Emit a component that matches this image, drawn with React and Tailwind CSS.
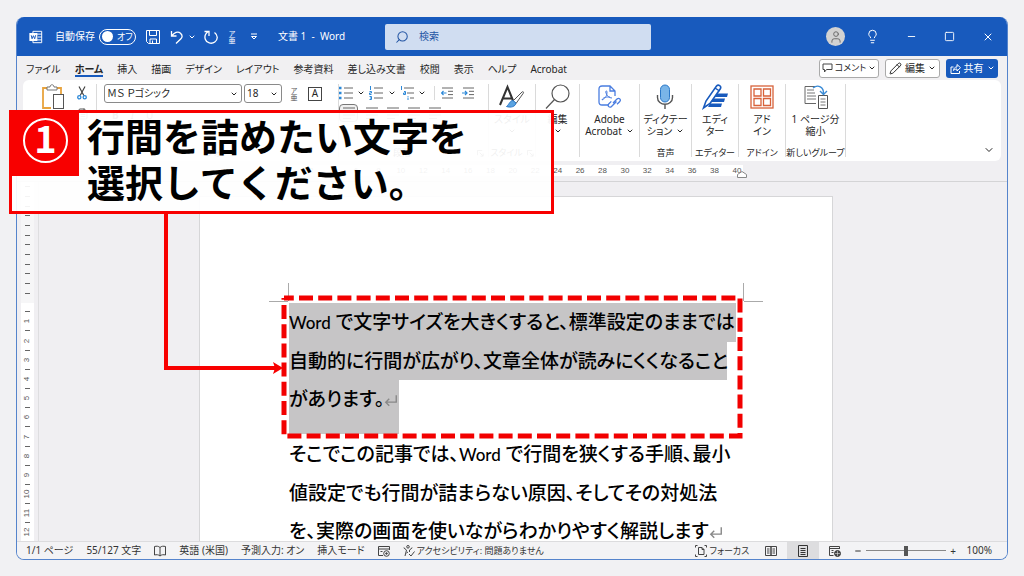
import { useState } from "react";
import {
    ChevronDown,
    FileText,
    Lightbulb,
    Minus,
    Pencil,
    Search,
    Square,
    User,
    X,
} from "lucide-react";

const tabs = ["ファイル", "ホーム", "挿入", "描画", "デザイン", "レイアウト", "参考資料", "差し込み文書", "校閲", "表示", "ヘルプ", "Acrobat"];

const rulerNumbers = Array.from({ length: 20 }, (_, i) => (i + 1) * 2);
const marginTicks = Array.from({ length: 12 }, (_, i) => i);
const sideRuler = Array.from({ length: 25 }, (_, i) => (i % 2 ? (i + 1) / 2 : null));

const WordIcon = () => (
    <svg viewBox="0 0 16 16" className="h-[14px] w-[14px]" fill="none" stroke="white" strokeWidth="1.1">
        <path d="M4.5 4V1.5h10v13h-10V12M8 4.7h6.5M10 8h4.5M8 11.3h6.5" />
        <rect x="1" y="4" width="8" height="8" fill="white" />
        <path d="M2.5 6l1 4L5 6.5 6.5 10l1-4" stroke="#185abd" />
    </svg>
);

const SaveIcon = () => (
    <svg viewBox="0 0 14 14" className="h-[14px] w-[14px]" fill="none" stroke="white">
        <path d="M.5.5h13v13H2.500l-2-2zM3.500.5v5h7v-5M4 13.500V9h6.500v4.500M6.500 10.500v3" />
    </svg>
);

const UndoIcon = () => (
    <svg viewBox="0 0 14 14" className="h-[14px] w-[14px]" fill="none" stroke="white" strokeWidth="1.300">
        <path d="M1.500 1v5h5M1.800 5.800C4 2.500 8 .8 10.500 3.200s1.700 4.300.2 5.800L6 13.500" />
    </svg>
);

const RedoIcon = () => (
    <svg viewBox="0 0 14 14" className="h-[14px] w-[14px]" fill="none" stroke="white" strokeWidth="1.300">
        <path d="M10.500 2.500C14 5 14.200 9.500 10.800 12S2.500 13 1.300 9.200 2 3 4.500 1.500M.5 1.500H5v4.500" />
    </svg>
);

const RubyIcon = ({ className }) => (
    <span className={`flex w-3 flex-col items-center text-[7px] leading-[7px] ${className}`}>
        <span>ア</span>
        <span>亜</span>
    </span>
);

const CommentIcon = () => (
    <svg viewBox="0 0 11 10" className="h-[10px] w-[11px]" fill="none" stroke="#444">
        <path d="M1 1h9v5.500H4.500L2.500 9V6.500H1z" />
    </svg>
);

const ShareIcon = () => (
    <svg viewBox="0 0 11 11" className="h-[11px] w-[11px]" fill="none" stroke="white">
        <path d="M3.500 4H1v6.500h8.500V8M3.500 7.500c.3-2.500 1.500-3.500 3.500-3.500V1.500l3.500 3.200L7 8V6C5.500 6 4.500 6.300 3.500 7.500z" />
    </svg>
);

const PasteIcon = () => (
    <svg viewBox="0 0 24 26" className="h-[26px] w-6" fill="none">
        <path d="M7 4H2v20h8M15 4h5v6" stroke="#e8a33d" strokeWidth="1.8" />
        <path d="M6 6V3h3c0-3 4-3 4 0h3v3z" stroke="#777" fill="white" />
        <rect x="12.500" y="10.500" width="10" height="14" fill="white" stroke="#555" />
    </svg>
);

const CutIcon = () => (
    <svg viewBox="0 0 10 14" className="h-[14px] w-[10px]" fill="none">
        <path d="M2 .5l4.800 9M8 .5L3.200 9.500" stroke="#444" strokeWidth="1.200" />
        <circle cx="2.300" cy="11.300" r="1.600" stroke="#2b88d8" strokeWidth="1.300" />
        <circle cx="7.700" cy="11.300" r="1.600" stroke="#2b88d8" strokeWidth="1.300" />
    </svg>
);

const ListIcon = ({ type }) => (
    <svg viewBox="0 0 14 14" className="h-[14px] w-[14px]" fill="none">
        <path d={type === "multi" ? "M4 2h10M7 7h7M10 12h4" : "M5 2h9M5 7h9M5 12h9"} stroke="#666" />
        {type === "bullet" && <path d="M0 2h2.500M0 7h2.500M0 12h2.500" stroke="#2b88d8" strokeWidth="2.500" />}
        {type === "number" && <path d="M1.500 0v4M.5 5.500h2v1.500h-2v1.500h2M.5 10.500h2v3h-2M1 12h1.500" stroke="#2b88d8" />}
        {type === "multi" && <path d="M1.500 0v4M4 5.500h1.500v3h-2V7H5M8 10v.8M8 11.500V14" stroke="#2b88d8" />}
    </svg>
);

const IndentIcon = ({ right }) => (
    <svg viewBox="0 0 13 12" className="h-3 w-[13px]" fill="none">
        <path d="M1 1h11M7 4.300h5M7 7.600h5M1 11h11" stroke="#666" />
        <path d={right ? "M0 6h5M3 4l2 2-2 2" : "M5.500 6h-5M2.500 4l-2 2 2 2"} stroke="#2b88d8" strokeWidth="1.200" />
    </svg>
);

const AlignIcon = () => (
    <svg viewBox="0 0 14 12" className="h-3 w-[14px]" stroke="#666">
        <path d="M1 1h12M1 4.500h8M1 8h12M1 11.500h8" />
    </svg>
);

const StyleIcon = () => (
    <svg viewBox="0 0 26 26" className="h-[26px] w-[26px]" fill="none">
        <path d="M1 21L8.500 3 15 19M4 14.500h9" stroke="#333" strokeWidth="2" />
        <path d="M14 17L23 8c1-.8 2 0 1.300 1.200L17 19.500z" stroke="#555" fill="white" />
        <path d="M14 16.500c-3 0-3.500 3.500-6.500 6 4.500 1.500 9 0 9.500-3.500z" fill="#5ba3e0" stroke="#2b78c8" />
    </svg>
);

const FindIcon = () => (
    <svg viewBox="0 0 26 26" className="h-[26px] w-[26px]" fill="none" stroke="#555" strokeWidth="1.200">
        <circle cx="15.500" cy="9.500" r="8.500" />
        <path d="M9.500 15.500L1 24.500" />
    </svg>
);

const AcrobatIcon = () => (
    <svg viewBox="0 0 24 26" className="h-[26px] w-6" fill="none" stroke="#4a7de0" strokeWidth="1.300">
        <path d="M11 21H5c-2 0-3-1-3-3V5c0-2 1-3 3-3h8l5 5v5M13 2v5h5" />
        <path d="M5 16c4-2 5-5 5-8 0-2-2-1-1 1 1 3 3 5 6 5M5 16c1-3 5-3 8-3" strokeWidth="1" />
        <path d="M16 19l4-4c2-2 4.500.8 2.600 2.700L20 20.300M19 18l-4.500 4.500c-2 2-4.500-.7-2.600-2.700l2.400-2.400M15.500 21.500l4-4" />
    </svg>
);

const MicIcon = () => (
    <svg viewBox="0 0 20 26" className="h-[26px] w-5" fill="none">
        <path d="M2.500 11v2.500c0 9 15 9 15 0V11M10 20.500V25" stroke="#555" strokeWidth="1.400" />
        <rect x="5.500" y="1" width="9" height="17" rx="4.500" fill="#7ab5e8" stroke="#2b78c8" />
    </svg>
);

const EditorIcon = () => (
    <svg viewBox="0 0 26 26" className="h-[26px] w-[26px]" fill="none">
        <path d="M14 9.500h12l-1 3.500H12zM11 14.500h12l-1 3.500H9zM8 19.500h12l-1 3.500H6z" fill="#185abd" />
        <path d="M1.500 24L4 17 14.500 2c2-2 5 0 4 2.500L8 19.500z" stroke="#185abd" strokeWidth="1.600" fill="white" />
        <path d="M13 4l4.500 3" stroke="#185abd" strokeWidth="1.500" />
    </svg>
);

const AddinIcon = () => (
    <svg viewBox="0 0 24 24" className="my-px h-6 w-6" fill="none" stroke="#d8623a" strokeWidth="1.300">
        <rect x="1" y="1" width="22" height="22" />
        <path d="M4 4h7v7H4zM13.500 4h7v7h-7zM4 13.500h7v7H4zM13.500 13.500h7v7h-7z" />
    </svg>
);

const ShrinkIcon = () => (
    <svg viewBox="0 0 26 26" className="h-[26px] w-[26px]" fill="none">
        <path d="M12 2.500H2v17h11" stroke="#666" />
        <path d="M4 6h7M4 9h8M4 12h9M4 15h9" stroke="#777" />
        <path d="M15.500 11.500h9v13h-9z" stroke="#555" fill="white" />
        <path d="M17.500 15h5M17.500 18h5M17.500 21h5" stroke="#777" />
        <path d="M10 4c5-4 11-1 10.500 6M17 7l3.500 3.500L24 7" stroke="#3a8bd6" strokeWidth="1.400" />
    </svg>
);

const LauncherIcon = () => (
    <svg viewBox="0 0 8 8" className="h-[7px] w-[7px]" fill="none" stroke="#555">
        <path d="M.5 6V.5H6M3 3l4 4M7 4v3H4" />
    </svg>
);

const ProofIcon = () => (
    <svg viewBox="0 0 12 12" className="h-3 w-3" fill="none" stroke="#444">
        <path d="M6 2.500C4.500 1 2.500 1 .5 1.500v8.500c2-.5 4-.5 5.500 1 1.500-1.500 3.500-1.500 5.500-1V1.500C9.500 1 7.500 1 6 2.500V11" />
    </svg>
);

const MacroIcon = () => (
    <svg viewBox="0 0 12 12" className="h-3 w-3" fill="none" stroke="#444">
        <path d="M5 10.500H.5v-9h11V5M.5 4h11M2.500 6.500h2" />
        <circle cx="8.500" cy="8.500" r="2.800" />
        <circle cx="8.500" cy="8.500" r=".8" fill="#444" />
    </svg>
);

const AccessIcon = () => (
    <svg viewBox="0 0 12 12" className="h-3 w-3" fill="none" stroke="#444">
        <circle cx="5" cy="1.800" r="1.300" />
        <path d="M1 2.500c-.5 1 2.500 2 2.500 2.500L2 11M9 2.500c.5 1-2.500 2-2.500 2.500v2M3.500 8L5 7M6 9l2 2 3.500-4.500" />
    </svg>
);

const ReadIcon = () => (
    <svg viewBox="0 0 12 12" className="h-3 w-3" fill="none" stroke="#444">
        <path d="M.5 1.500h5.500v9H.5zM6 1.500h5.500v9H6zM2 4h2.500M2 6h2.500M2 8h2.500M7.500 4H10M7.500 6H10M7.500 8H10" />
    </svg>
);

const PrintIcon = () => (
    <svg viewBox="0 0 12 12" className="h-3 w-3" fill="none" stroke="#333">
        <path d="M1.500.5h9v11h-9zM3.500 3.500h5M3.500 5.500h5M3.500 7.500h5M3.500 9.500h5" />
    </svg>
);

const WebIcon = () => (
    <svg viewBox="0 0 12 12" className="h-3 w-3" fill="none" stroke="#444">
        <path d="M4.500 10.500h-4v-9h10V4M.5 3.500h10M2.500 5.500h2M2.500 7.500h2" />
        <circle cx="8.500" cy="8.500" r="3" fill="#444" />
        <path d="M6 8.500h5M8.500 6v5" stroke="#ddd" strokeWidth=".6" />
    </svg>
);

const Group = ({ icon, lines, label, arrow, className }) => (
    <div className={`flex flex-col items-center border-r border-[#dadada] text-center ${className}`}>
        <button type="button" className="flex flex-col items-center whitespace-nowrap">
            {icon}
            <span className="mt-[3px] block leading-3">{lines[0]}</span>
            <span className="flex h-3 items-center gap-1 leading-3">
                {lines[1]}
                {arrow && <ChevronDown className="h-2 w-2" strokeWidth={3} />}
            </span>
        </button>
        {label && <span className="mt-auto flex items-center gap-1 whitespace-nowrap text-[9px] leading-2">{label}</span>}
    </div>
);

const TitleBar = () => {
    const [autoSave, setAutoSave] = useState(false);

    return (
        <header className="flex h-[39px] shrink-0 items-center bg-[#185abd] text-white">
            <div className="flex w-[368px] shrink-0 items-center pl-3">
                <WordIcon />
                <label className="ml-3 flex items-center gap-1 whitespace-nowrap text-[10px]">
                    自動保存
                    <input type="checkbox" className="peer sr-only" checked={autoSave} onChange={(e) => setAutoSave(e.target.checked)} />
                    <span className="flex h-4 w-[37px] items-center gap-1 rounded-full border border-white pl-[2px] text-[9px]">
                        <span className="h-[11px] w-[11px] rounded-full bg-white" />
                        {autoSave ? "オン" : "オフ"}
                    </span>
                </label>
                <button type="button" aria-label="上書き保存" className="ml-[10px]"><SaveIcon /></button>
                <button type="button" aria-label="元に戻す" className="ml-[10px] flex items-center gap-1">
                    <UndoIcon />
                    <ChevronDown className="h-2 w-2" strokeWidth={3} />
                </button>
                <button type="button" aria-label="やり直し" className="ml-2"><RedoIcon /></button>
                <RubyIcon className="ml-2" />
                <button type="button" aria-label="クイックアクセス" className="ml-3">
                    <svg viewBox="0 0 8 8" className="h-2 w-2" fill="none" stroke="white"><path d="M1 1h6M1.500 3.500h5L4 6z" /></svg>
                </button>
                <span className="ml-5 whitespace-pre text-[10px]">文書 1  -  Word</span>
            </div>
            <label className="flex h-[26px] w-[266px] items-center gap-[10px] rounded-[2px] bg-[#d0ddf1] px-[10px] text-[#2456a4]">
                <Search className="h-[14px] w-[14px] shrink-0 -scale-x-100" strokeWidth={1.8} />
                <input type="text" aria-label="検索" placeholder="検索" className="w-full bg-transparent text-[10px] outline-none placeholder:text-[#2456a4]" />
            </label>
            <div className="ml-auto flex items-center pr-[13px]">
                <span className="mr-5 flex h-[19px] w-[19px] items-center justify-center rounded-full bg-[#d2d2d2] text-[#666]">
                    <User className="h-[14px] w-[14px]" strokeWidth={1.6} />
                </span>
                <button type="button" aria-label="ヒント" className="mr-[26px]"><Lightbulb className="h-[15px] w-[15px]" strokeWidth={1.6} /></button>
                <button type="button" aria-label="最小化" className="mr-[27px]"><Minus className="h-[11px] w-[11px]" strokeWidth={2} /></button>
                <button type="button" aria-label="最大化" className="mr-[27px]"><Square className="h-[11px] w-[11px]" strokeWidth={2} /></button>
                <button type="button" aria-label="閉じる"><X className="h-3 w-3" strokeWidth={2} /></button>
            </div>
        </header>
    );
};

const TabBar = () => (
    <nav className="flex h-6 shrink-0 items-center bg-[#f1f0f2] pl-[9px] pr-[9px]">
        <div className="flex items-center gap-[14px] self-end whitespace-nowrap pb-[3px] text-[10px]">
            {tabs.map((tab) => (
                <a
                    key={tab}
                    href="#"
                    className={tab === "ホーム" ? "border-b-2 border-[#185abd] font-bold leading-3" : "border-b-2 border-transparent leading-3"}
                >
                    {tab}
                </a>
            ))}
        </div>
        <div className="ml-auto flex items-center gap-[6px] whitespace-nowrap text-[10px]">
            <button type="button" className="flex h-[19px] w-[60px] items-center justify-center gap-[2px] rounded-[3px] border border-[#aaa] bg-white text-[9px]">
                <CommentIcon />
                コメント
                <ChevronDown className="h-2 w-2 shrink-0" strokeWidth={3} />
            </button>
            <button type="button" className="flex h-[19px] w-[55px] items-center justify-center gap-[3px] rounded-[3px] border border-[#aaa] bg-white">
                <Pencil className="h-[13px] w-[13px]" strokeWidth={1.8} />
                編集
                <ChevronDown className="h-2 w-2" strokeWidth={3} />
            </button>
            <button type="button" className="flex h-[19px] w-[52px] items-center justify-center gap-[3px] rounded-[3px] bg-[#185abd] text-white">
                <ShareIcon />
                共有
                <ChevronDown className="h-2 w-2" strokeWidth={3} />
            </button>
        </div>
    </nav>
);

const Ribbon = () => (
    <section className="mx-[6px] flex h-[81px] shrink-0 rounded-md bg-white py-1 text-[10px]">
        <div className="flex w-[74px] shrink-0 flex-col border-r border-[#dadada] pl-[18px]">
            <div className="flex gap-3">
                <PasteIcon />
                <div className="flex flex-col gap-2 pt-[2px]">
                    <CutIcon />
                    <FileText className="h-3 w-3 text-[#555]" />
                </div>
            </div>
        </div>

        <div className="flex w-[242px] shrink-0 flex-col border-r border-[#dadada] pl-[7px]">
            <div className="flex items-center gap-[2px]">
                <div className="relative w-[138px]">
                    <select aria-label="フォント" className="block h-[19px] w-full appearance-none rounded-[3px] border border-[#8a8a8a] bg-white pl-[2px] text-[10px]">
                        <option>ＭＳ Ｐゴシック</option>
                    </select>
                    <ChevronDown className="pointer-events-none absolute right-1 top-[6px] h-2 w-2" strokeWidth={3} />
                </div>
                <div className="relative w-[38px]">
                    <select aria-label="フォントサイズ" className="block h-[19px] w-full appearance-none rounded-[3px] border border-[#8a8a8a] bg-white pl-[2px] text-[10px]">
                        <option>18</option>
                    </select>
                    <ChevronDown className="pointer-events-none absolute right-1 top-[6px] h-2 w-2" strokeWidth={3} />
                </div>
                <RubyIcon className="ml-1 text-[#555]" />
                <span className="ml-[6px] flex h-[14px] w-[14px] items-center justify-center border border-[#444] text-[10px]">A</span>
            </div>
            <div className="flex gap-3 pl-2 pt-1 text-[10px] leading-4 text-[#444]">
                <b>B</b>
                <i>I</i>
                <u>U</u>
            </div>
            <div className="mt-auto flex items-center justify-center text-[9px] leading-2">
                フォント
            </div>
        </div>

        <div className="flex w-[150px] shrink-0 flex-col border-r border-[#dadada]">
            <div className="flex h-[18px] items-center">
                <div className="flex w-24 items-center justify-between border-r border-[#dadada] pr-2">
                    <ListIcon type="bullet" />
                    <ChevronDown className="h-2 w-2" strokeWidth={3} />
                    <ListIcon type="number" />
                    <ChevronDown className="h-2 w-2" strokeWidth={3} />
                    <ListIcon type="multi" />
                    <ChevronDown className="h-2 w-2" strokeWidth={3} />
                </div>
                <div className="flex items-center gap-2 pl-[6px]">
                    <IndentIcon />
                    <IndentIcon right />
                </div>
            </div>
            <div className="flex items-center gap-[7px] pt-[2px]">
                <span className="flex h-[18px] w-[19px] items-center justify-center rounded-[4px] border border-[#777] bg-[#f0f0f0]">
                    <AlignIcon />
                </span>
                <AlignIcon />
                <AlignIcon />
                <AlignIcon />
                <AlignIcon />
            </div>
            <span className="mt-auto flex items-center justify-end gap-4 pr-1 text-[9px] leading-2">
                <span className="pr-[50px]">段落</span>
                <LauncherIcon />
            </span>
        </div>

        <Group className="w-[47px] shrink-0" icon={<StyleIcon />} lines={["スタイル", ""]} arrow label={<>スタイル<LauncherIcon /></>} />
        <Group className="w-11 shrink-0" icon={<FindIcon />} lines={["編集", ""]} arrow />
        <Group className="w-[60px] shrink-0" icon={<AcrobatIcon />} lines={["Adobe", "Acrobat"]} arrow />
        <Group className="w-[52px] shrink-0" icon={<MicIcon />} lines={["ディクテー", "ション"]} arrow label="音声" />
        <Group className="w-[47px] shrink-0" icon={<EditorIcon />} lines={["エディ", "ター"]} label="エディター" />
        <Group className="w-[47px] shrink-0" icon={<AddinIcon />} lines={["アド", "イン"]} label="アドイン" />
        <Group className="w-[60px] shrink-0" icon={<ShrinkIcon />} lines={["1 ページ分", "縮小"]} label="新しいグループ" />
        <button type="button" aria-label="リボンの表示オプション" className="ml-auto mr-[6px] self-end pb-[1px]">
            <ChevronDown className="h-3 w-3" />
        </button>
    </section>
);

const TopRuler = () => (
    <div className="flex h-[21px] shrink-0 items-start justify-center border-b border-[#d4d4d6] pl-[22px] pr-[14px] pt-1">
        <div className="relative flex w-[454px] bg-white pl-[11px]">
            <div className="flex w-[448px] shrink-0 text-[8px] leading-[11px] text-[#555] [font-family:'Liberation_Sans',sans-serif]">
                {rulerNumbers.map((n) => (
                    <span key={n} className="w-0 flex-1 text-center">{n}</span>
                ))}
            </div>
            <svg viewBox="0 0 10 7" className="absolute -right-1 top-[6px] h-[7px] w-[10px]" fill="white" stroke="#888">
                <path d="M.5 6.500V3.500L5 .5l4.500 3v3z" />
            </svg>
        </div>
    </div>
);

const SideRuler = () => (
    <div className="flex w-[22px] shrink-0 flex-col overflow-hidden border-r border-[#dedee0] pl-1 text-[8px] text-[#555] [font-family:'Liberation_Sans',sans-serif]">
        <div className="flex h-[121px] w-[13px] shrink-0 flex-col bg-[#f6f6f7] pb-[5px]">
            {marginTicks.map((t) => (
                <span key={t} className="flex h-0 flex-1 items-center justify-center"><i className="block h-px w-[5px] bg-[#666]" /></span>
            ))}
        </div>
        <div className="w-[13px] shrink-0 bg-white pt-1">
            <div className="flex h-[240px] flex-col">
                {sideRuler.map((n, i) => (
                    <span key={i} className="flex h-0 flex-1 items-center justify-center">
                        {n ? <span className="-rotate-90 leading-none">{n}</span> : <i className="block h-px w-[5px] bg-[#666]" />}
                    </span>
                ))}
            </div>
        </div>
    </div>
);

const ReturnMark = () => (
    <svg viewBox="0 0 12 12" className="inline-block h-[14px] w-[14px] align-[-2px]" fill="none" stroke="#888" strokeWidth="1.200">
        <path d="M10.500 1v6H1.500M4.500 4l-3 3 3 3" />
    </svg>
);

const Page = () => (
    <div className="flex min-w-0 flex-1 justify-center overflow-hidden pr-[14px] pt-[14px]">
        <article className="w-[634px] shrink-0 border border-b-0 border-[#d6d6d8] bg-white px-[89px] pt-[106px] text-[19px] font-medium leading-[38px] text-black [font-family:Lato,'Noto_Sans_CJK_JP',sans-serif]">
            <div className="relative whitespace-nowrap">
                {/* 余白の角マーク */}
                <i className="absolute -left-px -top-5 h-[18px] w-px bg-[#aaa]" />
                <i className="absolute -left-5 -top-[2px] h-px w-[19px] bg-[#aaa]" />
                <i className="absolute -right-px -top-5 h-[18px] w-px bg-[#aaa]" />
                <i className="absolute -right-5 -top-[2px] h-px w-[19px] bg-[#aaa]" />
                <p>
                    <span className="block w-[447px] bg-[#c6c5c6]"><span className="text-[17px]">Word</span> で文字サイズを大きくすると、標準設定のままでは</span>
                    <span className="block w-[438px] bg-[#c6c5c6]">自動的に行間が広がり、文章全体が読みにくくなること</span>
                    <span className="block w-[110px] bg-[#c6c5c6] pb-4">があります。<ReturnMark /></span>
                </p>
                {/* 選択範囲の破線枠 */}
                <svg viewBox="0 0 464 146" className="absolute -left-2 -top-2 h-[146px] w-[464px]" fill="none">
                    <path d="M3 3H459V141H3V3" stroke="#f20000" strokeWidth="5" strokeDasharray="14 5.200" strokeDashoffset="4.200" />
                </svg>
            </div>
            <p className="whitespace-nowrap pt-px">
                そこでこの記事では、<span className="text-[17px]">Word</span> で行間を狭くする手順、最小
                <br />
                値設定でも行間が詰まらない原因、そしてその対処法
                <br />
                を、実際の画面を使いながらわかりやすく解説します<ReturnMark />
            </p>
        </article>
    </div>
);

const StatusBar = () => {
    const [zoom, setZoom] = useState(50);

    return (
        <footer className="flex h-[18px] shrink-0 items-center whitespace-nowrap border-t border-[#dcdcde] bg-[#f3f3f5] pl-[9px] pr-[15px] text-[10px] text-[#333]">
            <div className="flex items-center gap-[13px]">
                <span>1/1 ページ</span>
                <span>55/127 文字</span>
                <ProofIcon />
                <span>英語 (米国)</span>
                <span>予測入力: オン</span>
                <span>挿入モード</span>
                <MacroIcon />
                <span className="flex items-center gap-[2px] text-[9px]"><AccessIcon />アクセシビリティ: 問題ありません</span>
            </div>
            <div className="ml-auto flex h-full items-center">
                <button type="button" className="mr-4 flex items-center gap-[2px] text-[9px]">
                    <svg viewBox="0 0 12 12" className="h-3 w-3" fill="none" stroke="#444">
                        <path d="M2.500.5H.5v2M.5 9.500v2h2M9.500.5h2v2M11.500 9.500v2h-2M3.500 2.500H7l2 2v5H3.500zM7 2.500v2h2" />
                    </svg>
                    フォーカス
                </button>
                <button type="button" aria-label="閲覧モード"><ReadIcon /></button>
                <button type="button" aria-label="印刷レイアウト" className="ml-[10px] flex h-full w-8 items-center justify-center bg-[#dddddf]">
                    <PrintIcon />
                </button>
                <button type="button" aria-label="Web レイアウト" className="ml-[10px]"><WebIcon /></button>
                <button type="button" aria-label="縮小" className="ml-[13px]"><Minus className="h-2 w-2" strokeWidth={3} /></button>
                <input
                    type="range"
                    aria-label="ズーム"
                    value={zoom}
                    onChange={(e) => setZoom(Number(e.target.value))}
                    className="mx-1 h-[10px] w-20 appearance-none bg-[linear-gradient(#888,#888)] bg-[length:100%_1px] bg-center bg-no-repeat [&::-webkit-slider-thumb]:h-[10px] [&::-webkit-slider-thumb]:w-1 [&::-webkit-slider-thumb]:appearance-none [&::-webkit-slider-thumb]:bg-[#555]"
                />
                <button type="button" aria-label="拡大" className="leading-none">+</button>
                <span className="ml-2 w-7 text-right">100%</span>
            </div>
        </footer>
    );
};

const Callout = () => (
    <>
        <div className="absolute left-[9px] top-[110px] flex h-[104px] w-[545px] border-[3px] border-[#f80000] bg-white/93">
            <div className="flex h-[63px] w-[67px] shrink-0 items-center justify-center bg-[#f80000] pb-2">
                <span className="flex h-[45px] w-[45px] items-center justify-center rounded-full border-2 border-white pb-2 text-[38px] font-bold leading-none text-white [font-family:'Noto_Sans_CJK_JP',sans-serif]">1</span>
            </div>
            <p className="whitespace-nowrap pl-2 text-[38px] font-bold leading-[46px] text-black [font-feature-settings:normal]">
                行間を詰めたい文字を
                <br />
                選択してください。
            </p>
        </div>
        <svg viewBox="0 0 122 164" className="absolute left-[162px] top-[212px] h-[164px] w-[122px]" fill="none">
            <path d="M4 0V156H116" stroke="#f80000" strokeWidth="4" />
            <path d="M111 150l10 6-10 6 2-6z" fill="#f80000" />
        </svg>
    </>
);

const App = () => {
    return (
        <div className="relative h-screen overflow-hidden bg-[#f1f1f3] px-4 pb-4 pt-[17px] text-[#262626] [font-family:'Noto_Sans','Noto_Sans_CJK_JP',sans-serif] [font-feature-settings:'palt']">
            <main className="flex h-full flex-col overflow-hidden rounded-lg border border-t-0 border-[#5584cc] bg-[#f0eff2]">
                <TitleBar />
                <TabBar />
                <Ribbon />
                <TopRuler />
                <div className="flex min-h-0 flex-1">
                    <SideRuler />
                    <Page />
                </div>
                <StatusBar />
            </main>
            <Callout />
        </div>
    );
};

export default App;
